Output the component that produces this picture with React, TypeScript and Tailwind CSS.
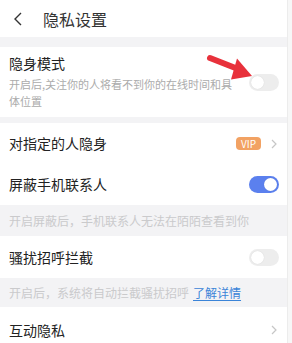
const font = { fontFamily: '"Noto Sans CJK SC", "Noto Sans", sans-serif' }

function Toggle({ on = false }: { on?: boolean }) {
  return (
    <div
      className={`w-[30px] h-[17px] rounded-full flex items-center px-[2px] ${
        on ? 'bg-[#5b80ee] justify-end' : 'bg-[#ededed] justify-start'
      }`}
    >
      <div className="w-[13px] h-[13px] rounded-full bg-white shadow-[0_0_1px_rgba(0,0,0,0.15)]" />
    </div>
  )
}

function Chevron() {
  return (
    <svg width="6" height="10" viewBox="0 0 6 10" fill="none" stroke="#c6c6c6" strokeWidth="1.2">
      <path d="M1 1l4 4-4 4" />
    </svg>
  )
}

export default function App() {
  return (
    <div className="w-[292px] h-[343px] flex overflow-hidden bg-[#f7f7f7]" style={font}>
      <div className="w-[287px] flex flex-col bg-[#f3f3f5]">
        {/* header */}
        <div className="h-[37px] bg-white flex items-center shrink-0">
          <svg className="ml-[13px]" width="10" height="14" viewBox="0 0 10 14" fill="none" stroke="#333" strokeWidth="1.4">
            <path d="M8 1L2 7l6 6" />
          </svg>
          <span className="ml-[20px] text-[16px] text-[#333] leading-none">隐私设置</span>
        </div>

        {/* 隐身模式 */}
        <div className="mt-[10px] h-[70px] bg-white relative flex shrink-0">
          <div className="pl-[9px] pt-[6px] w-[240px]">
            <div className="text-[14px] leading-[20px] text-[#222]">隐身模式</div>
            <div className="mt-[3px] text-[11px] leading-[17px] text-[#ababab]">
              开启后,关注你的人将看不到你的在线时间和具体位置
            </div>
          </div>
          <div className="absolute left-[249px] top-[27px]">
            <Toggle />
          </div>
          <svg className="absolute left-0 top-0" width="287" height="70" viewBox="0 47 287 70">
            <path d="M210 58 L238 69" stroke="#e8313b" strokeWidth="6" strokeLinecap="round" />
            <path d="M252 76 L237 58.5 L231 79.5 Z" fill="#e8313b" />
          </svg>
        </div>

        {/* 指定 / 屏蔽 */}
        <div className="mt-[6px] bg-white shrink-0">
          <div className="h-[41px] flex items-center pl-[9px] pr-[10px]">
            <span className="text-[14px] text-[#222] flex-1">对指定的人隐身</span>
            <span className="h-[13px] w-[25px] rounded-[4px] bg-[#f2a263] text-white text-[10px] leading-[13px] text-center mr-[10px]">
              VIP
            </span>
            <Chevron />
          </div>
          <div className="h-[41px] flex items-center pl-[9px] pr-[8px]">
            <span className="text-[14px] text-[#222] flex-1">屏蔽手机联系人</span>
            <Toggle on />
          </div>
        </div>
        <div className="h-[31px] flex items-center pl-[9px] text-[12px] text-[#cacacc] shrink-0">
          开启屏蔽后，手机联系人无法在陌陌查看到你
        </div>

        {/* 骚扰招呼拦截 */}
        <div className="h-[42px] bg-white flex items-center pl-[9px] pr-[8px] shrink-0">
          <span className="text-[14px] text-[#222] flex-1">骚扰招呼拦截</span>
          <Toggle />
        </div>
        <div className="h-[29px] flex items-center pl-[9px] text-[12px] text-[#cacacc] shrink-0">
          开启后，系统将自动拦截骚扰招呼
          <span className="ml-[4px] text-[#3b84d8] underline underline-offset-2">了解详情</span>
        </div>

        {/* 互动隐私 */}
        <div className="h-[46px] bg-white flex items-center pl-[9px] pr-[10px] shrink-0">
          <span className="text-[14px] text-[#222] flex-1">互动隐私</span>
          <Chevron />
        </div>
      </div>
      <div className="flex-1 border-l border-[#ececec]" />
    </div>
  )
}
